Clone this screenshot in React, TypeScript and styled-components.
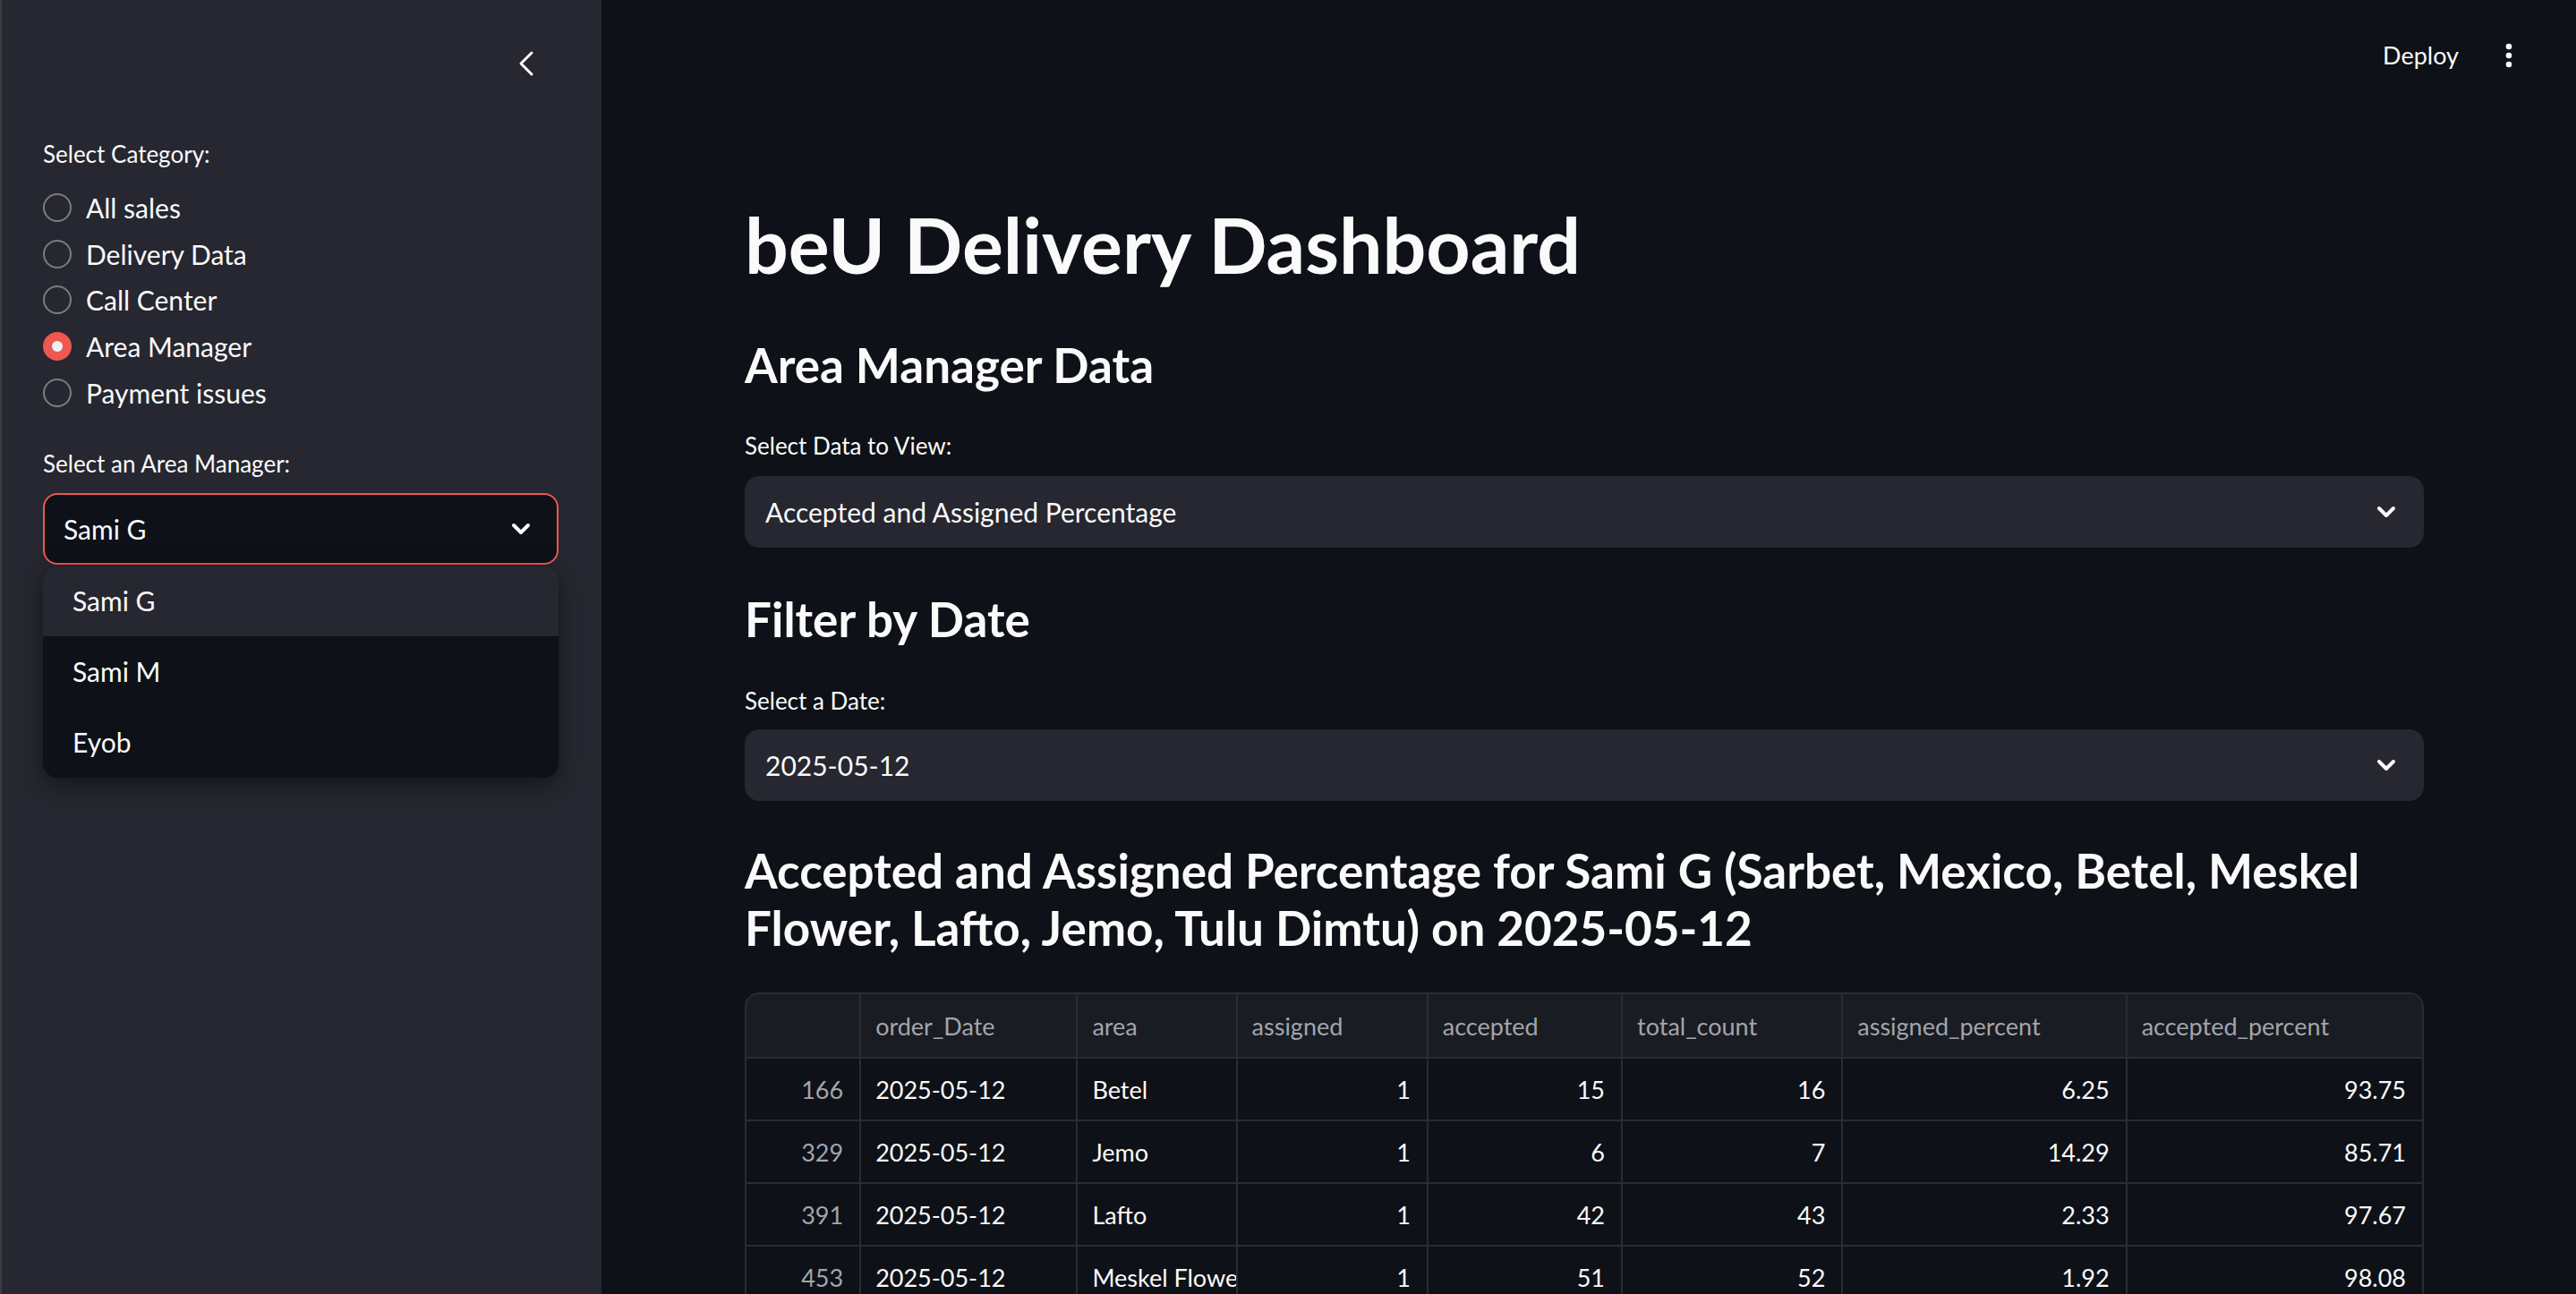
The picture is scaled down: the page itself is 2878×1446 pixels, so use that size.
import React from "react";
import styled, { createGlobalStyle } from "styled-components";
import { ChevronLeft, ChevronDown } from "lucide-react";

const GlobalStyle = createGlobalStyle`
  html, body { margin: 0; padding: 0; background: #0e1117; overflow: hidden; }
  body { font-family: Lato, "Noto Sans", sans-serif; color: #fafafa; -webkit-font-smoothing: antialiased; }
  * { box-sizing: border-box; }
`;

const Page = styled.div`
  display: flex;
  width: 2878px;
  height: 1446px;
  overflow: hidden;
  background: #0e1117;
`;

const Sidebar = styled.aside`
  width: 672px;
  flex: none;
  background: #262730;
  box-shadow: inset 2px 0 0 #3b3c44;
  padding: 0 48px;
  display: flex;
  flex-direction: column;
  overflow: hidden;
`;

const SidebarTop = styled.div`
  flex: none;
  height: 155px;
  padding-top: 47px;
  padding-right: 12px;
  display: flex;
  justify-content: flex-end;
  align-items: flex-start;
  color: #fafafa;
`;

const Label = styled.div<{ $gap?: number }>`
  flex: none;
  font-size: 26px;
  line-height: 34px;
  color: #fafafa;
  margin-top: ${(p) => p.$gap ?? 0}px;
`;

const RadioGroup = styled.div`
  flex: none;
  margin-top: 17px;
  display: flex;
  flex-direction: column;
`;

const RadioRow = styled.div`
  height: 51.75px;
  display: flex;
  align-items: center;
  gap: 16px;
  font-size: 30px;
`;

const RadioCircle = styled.span<{ $checked?: boolean }>`
  width: 32px;
  height: 32px;
  border-radius: 50%;
  flex: none;
  border: ${(p) => (p.$checked ? "none" : "2px solid #7c7d84")};
  background: ${(p) => (p.$checked ? "#ee5850" : "transparent")};
  display: flex;
  align-items: center;
  justify-content: center;
  &::after {
    content: "";
    width: 12px;
    height: 12px;
    border-radius: 50%;
    background: #eef0f6;
    display: ${(p) => (p.$checked ? "block" : "none")};
  }
`;

const SelectWrap = styled.div<{ $gap?: number }>`
  flex: none;
  position: relative;
  margin-top: ${(p) => p.$gap ?? 16}px;
`;

const SelectBox = styled.div<{ $focused?: boolean }>`
  height: 80px;
  border-radius: 16px;
  background: ${(p) => (p.$focused ? "#0e1117" : "#262730")};
  border: 2px solid ${(p) => (p.$focused ? "#ee5850" : "#262730")};
  display: flex;
  align-items: center;
  justify-content: space-between;
  padding: 0 24px 0 21px;
  font-size: 30px;
  color: #fafafa;
`;

const Dropdown = styled.div`
  position: absolute;
  top: 81px;
  left: 0;
  right: 0;
  background: #0e1117;
  border-radius: 16px;
  overflow: hidden;
  box-shadow: 0 8px 28px rgba(0, 0, 0, 0.45);
  z-index: 5;
`;

const Option = styled.div<{ $active?: boolean }>`
  height: 79px;
  display: flex;
  align-items: center;
  padding-left: 33px;
  font-size: 30px;
  background: ${(p) => (p.$active ? "#262730" : "transparent")};
`;

const Main = styled.main`
  flex: 1;
  display: flex;
  flex-direction: column;
  min-width: 0;
  overflow: hidden;
`;

const Toolbar = styled.header`
  flex: none;
  height: 120px;
  padding-top: 3px;
  padding-right: 71px;
  display: flex;
  align-items: center;
  justify-content: flex-end;
  gap: 52px;
`;

const DeployText = styled.span`
  font-size: 27px;
  color: #fafafa;
`;

const Content = styled.div`
  flex: none;
  padding: 0 170px 0 160px;
  display: flex;
  flex-direction: column;
`;

const Title = styled.h1`
  flex: none;
  margin: 100px 0 0;
  font-size: 86px;
  line-height: 106px;
  font-weight: 700;
`;

const SubHeader = styled.h3<{ $gap: number; $multi?: boolean }>`
  flex: none;
  margin: ${(p) => p.$gap}px 0 0;
  font-size: 53px;
  line-height: ${(p) => (p.$multi ? 64 : 68)}px;
  font-weight: 700;
`;

const TableFrame = styled.div`
  flex: none;
  margin-top: 40px;
  border: 2px solid #2a2c34;
  border-bottom: none;
  border-radius: 16px 16px 0 0;
  overflow: hidden;
  background: #2a2c34;
  display: grid;
  grid-template-columns: 126fr 240fr 176fr 211fr 215fr 244fr 315fr 329fr;
  column-gap: 2px;
  row-gap: 2px;
`;

const HeadCell = styled.div`
  height: 70px;
  background: #1a1c23;
  color: #a2a5ad;
  font-size: 27px;
  display: flex;
  align-items: center;
  padding: 0 16px;
  white-space: nowrap;
  overflow: hidden;
`;

const Cell = styled.div<{ $num?: boolean; $index?: boolean }>`
  height: 68px;
  background: #0e1117;
  color: ${(p) => (p.$index ? "#a2a5ad" : "#fafafa")};
  font-size: 27px;
  display: flex;
  align-items: center;
  justify-content: ${(p) => (p.$num ? "flex-end" : "flex-start")};
  padding: 0 ${(p) => (p.$num ? 18 : 16)}px 0 16px;
  white-space: nowrap;
  overflow: hidden;
`;

const Kebab = () => (
  <svg width="8" height="28" viewBox="0 0 8 28">
    <circle cx="4" cy="4" r="3.3" fill="#fafafa" />
    <circle cx="4" cy="14" r="3.3" fill="#fafafa" />
    <circle cx="4" cy="24" r="3.3" fill="#fafafa" />
  </svg>
);

const categories = ["All sales", "Delivery Data", "Call Center", "Area Manager", "Payment issues"];
const managers = ["Sami G", "Sami M", "Eyob"];
const columns = ["", "order_Date", "area", "assigned", "accepted", "total_count", "assigned_percent", "accepted_percent"];
const rows = [
  ["166", "2025-05-12", "Betel", "1", "15", "16", "6.25", "93.75"],
  ["329", "2025-05-12", "Jemo", "1", "6", "7", "14.29", "85.71"],
  ["391", "2025-05-12", "Lafto", "1", "42", "43", "2.33", "97.67"],
  ["453", "2025-05-12", "Meskel Flower", "1", "51", "52", "1.92", "98.08"],
];

export default function App() {
  return (
    <>
      <GlobalStyle />
      <Page>
        <Sidebar>
          <SidebarTop>
            <ChevronLeft size={48} strokeWidth={1.5} />
          </SidebarTop>
          <Label>Select Category:</Label>
          <RadioGroup>
            {categories.map((c) => (
              <RadioRow key={c}>
                <RadioCircle $checked={c === "Area Manager"} />
                {c}
              </RadioRow>
            ))}
          </RadioGroup>
          <Label $gap={36}>Select an Area Manager:</Label>
          <SelectWrap $gap={16}>
            <SelectBox $focused>
              <span>Sami G</span>
              <ChevronDown size={32} strokeWidth={3} />
            </SelectBox>
            <Dropdown>
              {managers.map((m, i) => (
                <Option key={m} $active={i === 0}>
                  {m}
                </Option>
              ))}
            </Dropdown>
          </SelectWrap>
        </Sidebar>
        <Main>
          <Toolbar>
            <DeployText>Deploy</DeployText>
            <Kebab />
          </Toolbar>
          <Content>
            <Title>beU Delivery Dashboard</Title>
            <SubHeader $gap={48}>Area Manager Data</SubHeader>
            <Label $gap={39}>Select Data to View:</Label>
            <SelectWrap $gap={17}>
              <SelectBox>
                <span>Accepted and Assigned Percentage</span>
                <ChevronDown size={32} strokeWidth={3} />
              </SelectBox>
            </SelectWrap>
            <SubHeader $gap={46}>Filter by Date</SubHeader>
            <Label $gap={40}>Select a Date:</Label>
            <SelectWrap $gap={15}>
              <SelectBox>
                <span>2025-05-12</span>
                <ChevronDown size={32} strokeWidth={3} />
              </SelectBox>
            </SelectWrap>
            <SubHeader $gap={46} $multi>
              Accepted and Assigned Percentage for Sami G (Sarbet, Mexico, Betel, Meskel Flower, Lafto, Jemo, Tulu Dimtu) on 2025-05-12
            </SubHeader>
            <TableFrame>
              {columns.map((c, i) => (
                <HeadCell key={i}>{c}</HeadCell>
              ))}
              {rows.map((r) =>
                r.map((v, i) => (
                  <Cell key={r[0] + i} $index={i === 0} $num={i === 0 || i >= 3}>
                    {v}
                  </Cell>
                ))
              )}
            </TableFrame>
          </Content>
        </Main>
      </Page>
    </>
  );
}
